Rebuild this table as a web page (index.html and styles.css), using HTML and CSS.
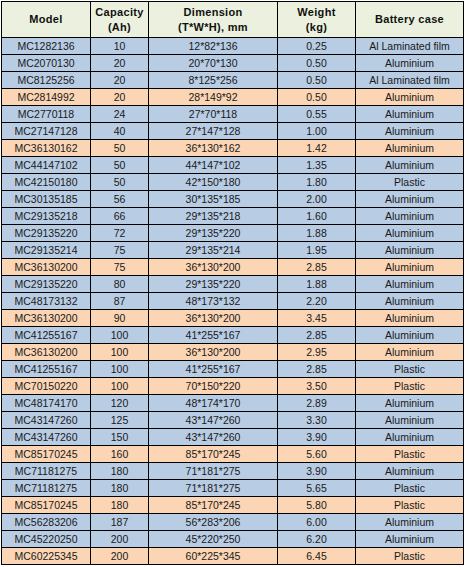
FILE: index.html
```html
<!DOCTYPE html>
<html>
<head>
<meta charset="utf-8">
<link rel="stylesheet" href="styles.css">
</head>
<body>
<table class="spec">
<colgroup>
<col class="c-model"><col class="c-cap"><col class="c-dim"><col class="c-wt"><col class="c-case">
</colgroup>
<thead>
<tr>
<th>Model</th>
<th>Capacity<br>(Ah)</th>
<th>Dimension<br>(T*W*H), mm</th>
<th>Weight<br>(kg)</th>
<th>Battery case</th>
</tr>
</thead>
<tbody>
<tr class="b"><td>MC1282136</td><td>10</td><td>12*82*136</td><td>0.25</td><td>Al Laminated film</td></tr>
<tr class="b"><td>MC2070130</td><td>20</td><td>20*70*130</td><td>0.50</td><td>Aluminium</td></tr>
<tr class="b"><td>MC8125256</td><td>20</td><td>8*125*256</td><td>0.50</td><td>Al Laminated film</td></tr>
<tr class="o"><td>MC2814992</td><td>20</td><td>28*149*92</td><td>0.50</td><td>Aluminium</td></tr>
<tr class="b"><td>MC2770118</td><td>24</td><td>27*70*118</td><td>0.55</td><td>Aluminium</td></tr>
<tr class="b"><td>MC27147128</td><td>40</td><td>27*147*128</td><td>1.00</td><td>Aluminium</td></tr>
<tr class="o"><td>MC36130162</td><td>50</td><td>36*130*162</td><td>1.42</td><td>Aluminium</td></tr>
<tr class="b"><td>MC44147102</td><td>50</td><td>44*147*102</td><td>1.35</td><td>Aluminium</td></tr>
<tr class="b"><td>MC42150180</td><td>50</td><td>42*150*180</td><td>1.80</td><td>Plastic</td></tr>
<tr class="b"><td>MC30135185</td><td>56</td><td>30*135*185</td><td>2.00</td><td>Aluminium</td></tr>
<tr class="b"><td>MC29135218</td><td>66</td><td>29*135*218</td><td>1.60</td><td>Aluminium</td></tr>
<tr class="b"><td>MC29135220</td><td>72</td><td>29*135*220</td><td>1.88</td><td>Aluminium</td></tr>
<tr class="b"><td>MC29135214</td><td>75</td><td>29*135*214</td><td>1.95</td><td>Aluminium</td></tr>
<tr class="o"><td>MC36130200</td><td>75</td><td>36*130*200</td><td>2.85</td><td>Aluminium</td></tr>
<tr class="b"><td>MC29135220</td><td>80</td><td>29*135*220</td><td>1.88</td><td>Aluminium</td></tr>
<tr class="b"><td>MC48173132</td><td>87</td><td>48*173*132</td><td>2.20</td><td>Aluminium</td></tr>
<tr class="o"><td>MC36130200</td><td>90</td><td>36*130*200</td><td>3.45</td><td>Aluminium</td></tr>
<tr class="b"><td>MC41255167</td><td>100</td><td>41*255*167</td><td>2.85</td><td>Aluminium</td></tr>
<tr class="o"><td>MC36130200</td><td>100</td><td>36*130*200</td><td>2.95</td><td>Aluminium</td></tr>
<tr class="b"><td>MC41255167</td><td>100</td><td>41*255*167</td><td>2.85</td><td>Plastic</td></tr>
<tr class="o"><td>MC70150220</td><td>100</td><td>70*150*220</td><td>3.50</td><td>Plastic</td></tr>
<tr class="b"><td>MC48174170</td><td>120</td><td>48*174*170</td><td>2.89</td><td>Aluminium</td></tr>
<tr class="b"><td>MC43147260</td><td>125</td><td>43*147*260</td><td>3.30</td><td>Aluminium</td></tr>
<tr class="b"><td>MC43147260</td><td>150</td><td>43*147*260</td><td>3.90</td><td>Aluminium</td></tr>
<tr class="o"><td>MC85170245</td><td>160</td><td>85*170*245</td><td>5.60</td><td>Plastic</td></tr>
<tr class="b"><td>MC71181275</td><td>180</td><td>71*181*275</td><td>3.90</td><td>Aluminium</td></tr>
<tr class="b"><td>MC71181275</td><td>180</td><td>71*181*275</td><td>5.65</td><td>Plastic</td></tr>
<tr class="o"><td>MC85170245</td><td>180</td><td>85*170*245</td><td>5.80</td><td>Plastic</td></tr>
<tr class="b"><td>MC56283206</td><td>187</td><td>56*283*206</td><td>6.00</td><td>Aluminium</td></tr>
<tr class="b"><td>MC45220250</td><td>200</td><td>45*220*250</td><td>6.20</td><td>Aluminium</td></tr>
<tr class="o"><td>MC60225345</td><td>200</td><td>60*225*345</td><td>6.45</td><td>Plastic</td></tr>
</tbody>
</table>
</body>
</html>
```
FILE: styles.css
```css
html, body {
  margin: 0;
  padding: 0;
  background: #ffffff;
}
body {
  padding: 1px 0 0 1px;
  font-family: "Liberation Sans", Arial, sans-serif;
}
.spec {
  border-collapse: collapse;
  table-layout: fixed;
  width: 463px;
}
.c-model { width: 89px; }
.c-cap { width: 58px; }
.c-dim { width: 129px; }
.c-wt { width: 78px; }
.c-case { width: 108px; }
.spec th,
.spec td {
  border: 1px solid #000;
  padding: 0;
  text-align: center;
  vertical-align: middle;
  white-space: nowrap;
  overflow: hidden;
}
.spec th {
  height: 35px;
  background: #ebf1de;
  font-weight: bold;
  font-size: 11px;
  letter-spacing: 0.3px;
  line-height: 15px;
  color: #111;
}
.spec td {
  height: 16px;
  font-size: 10.5px;
  line-height: 16px;
  color: #1a1a1a;
}
.spec tr.b td { background: #b8cce4; }
.spec tr.o td { background: #fcd5b4; }
```
